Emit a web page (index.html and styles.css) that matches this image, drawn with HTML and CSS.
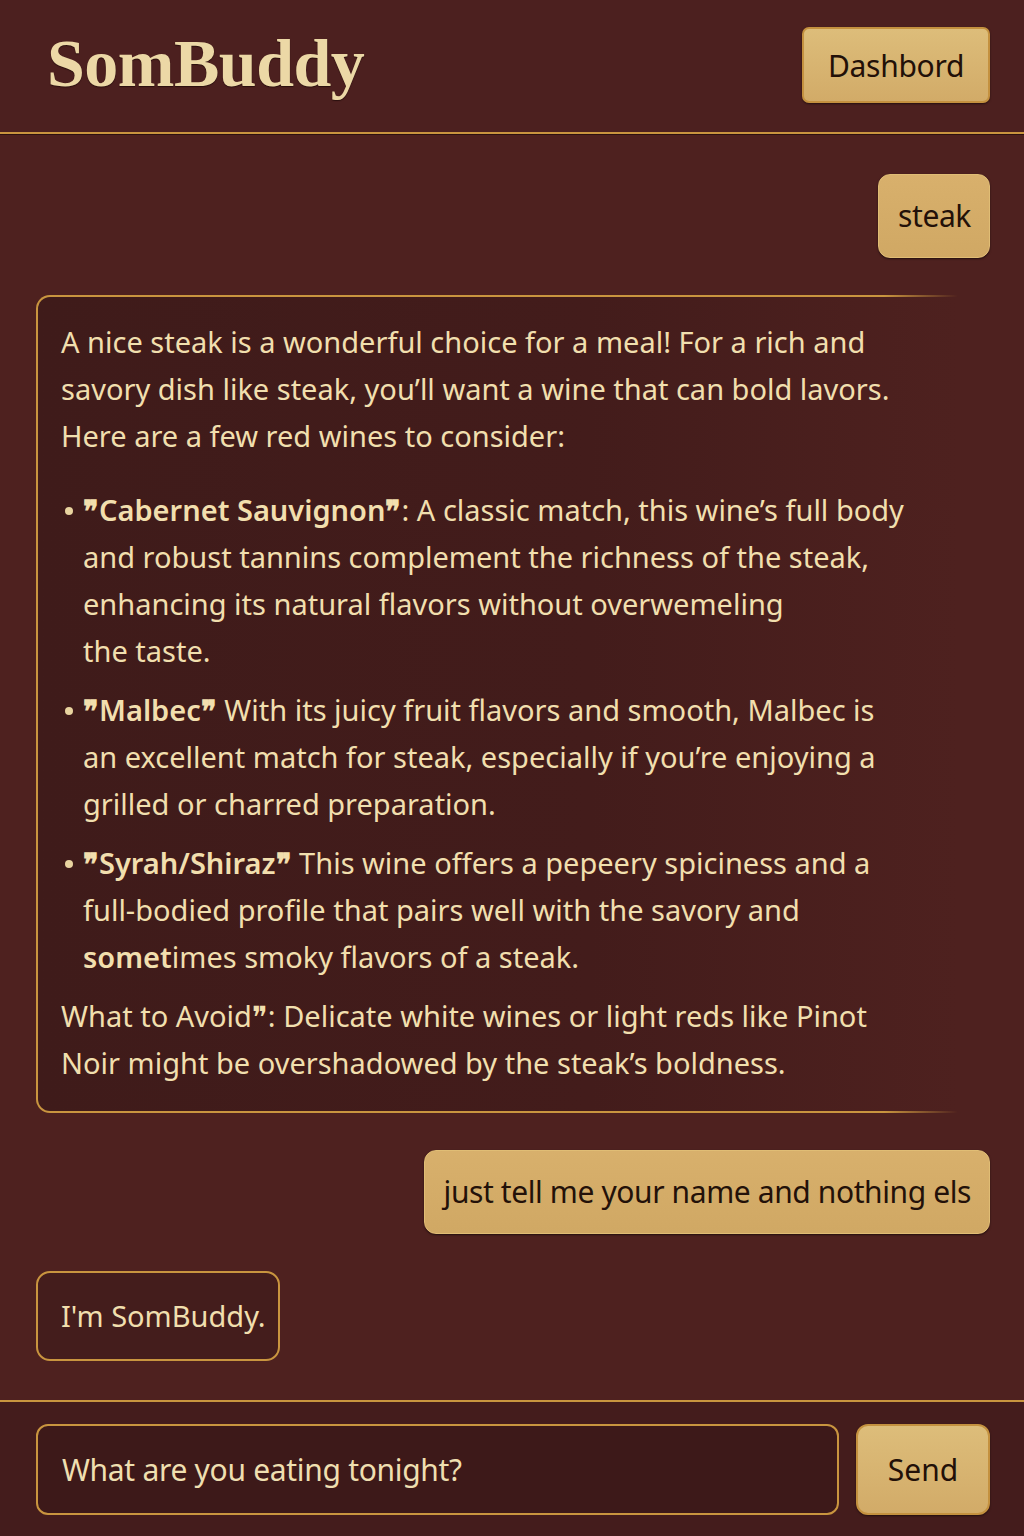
FILE: index.html
```html
<!DOCTYPE html>
<html lang="en">
<head>
<meta charset="utf-8">
<title>SomBuddy</title>
<link rel="stylesheet" href="styles.css">
</head>
<body>
<div class="app">
  <header class="topbar">
    <h1 class="brand">SomBuddy</h1>
    <button class="btn-gold dash">Dashbord</button>
  </header>
  <main class="chat">
    <div class="row user"><div class="bubble-user">steak</div></div>
    <div class="row bot">
      <div class="bubble-bot big">
        <p class="intro">A nice steak is a wonderful choice for a meal! For a rich and<br>savory dish like steak, you’ll want a wine that can bold lavors.<br>Here are a few red wines to consider:</p>
        <ul class="wines">
          <li><b>❞Cabernet Sauvignon❞</b>: A classic match, this wine’s full body<br>and robust tannins complement the richness of the steak,<br>enhancing its natural flavors without overwemeling<br>the taste.</li>
          <li><b>❞Malbec❞</b> With its juicy fruit flavors and smooth, Malbec is<br>an excellent match for steak, especially if you’re enjoying a<br>grilled or charred preparation.</li>
          <li><b>❞Syrah/Shiraz❞</b> This wine offers a pepeery spiciness and a<br>full-bodied profile that pairs well with the savory and<br><b>somet</b>imes smoky flavors of a steak.</li>
        </ul>
        <p class="avoid">What to Avoid❞: Delicate white wines or light reds like Pinot<br>Noir might be overshadowed by the steak’s boldness.</p>
      </div>
    </div>
    <div class="row user"><div class="bubble-user">just tell me your name and nothing els</div></div>
    <div class="row bot"><div class="bubble-bot small">I'm SomBuddy.</div></div>
  </main>
  <footer class="composer">
    <div class="input">What are you eating tonight?</div>
    <button class="btn-gold send">Send</button>
  </footer>
</div>
</body>
</html>
```

FILE: styles.css
```css
* { box-sizing: border-box; }
html, body { margin: 0; padding: 0; }
body {
  background: #4e211f;
  font-family: "Noto Sans", "Open Sans", sans-serif;
  color: #f1dfae;
}
.app {
  width: 1024px;
  height: 1536px;
  display: flex;
  flex-direction: column;
}
.topbar {
  height: 134px;
  display: flex;
  align-items: center;
  justify-content: space-between;
  padding: 0 34px 6px 47px;
  background: #4c201f;
  border-bottom: 2px solid #c9953f;
  box-shadow: 0 1px 0 #2d1110;
}
.brand {
  margin: 0;
  font-family: "Liberation Serif", "Times New Roman", serif;
  font-weight: bold;
  font-size: 68px;
  letter-spacing: -0.5px;
  color: #ecd8a6;
  text-shadow: 0 1px 1px #2a0f0e;
}
.btn-gold {
  font-family: "Noto Sans", sans-serif;
  color: #221008;
  background: linear-gradient(#ddbd7a, #d2ab68);
  border: 2px solid #c4913f;
  border-radius: 7px;
  box-shadow: 0 1px 2px rgba(0,0,0,0.5);
  cursor: pointer;
}
.dash {
  width: 188px;
  height: 76px;
  font-size: 30px;
  letter-spacing: -0.3px;
  margin-top: 4px;
}
.chat {
  flex: 1;
  display: flex;
  flex-direction: column;
  padding: 40px 34px 0 36px;
  gap: 37px;
}
.row { display: flex; }
.row.user { justify-content: flex-end; }
.row.bot { justify-content: flex-start; }
.bubble-user {
  background: linear-gradient(#d8b06c, #d0a864);
  border: 1px solid #e0bd75;
  border-radius: 12px;
  color: #231109;
  font-size: 30px;
  letter-spacing: -0.4px;
  padding: 20px 18px 21px 19px;
  box-shadow: 0 1px 2px rgba(0,0,0,0.55);
}
.bubble-bot {
  border: 2px solid transparent;
  border-radius: 14px;
  font-size: 29px;
  line-height: 47px;
  letter-spacing: 0;
}
.bubble-bot.big {
  width: 922px;
  border-right: none;
  border-top-right-radius: 0;
  border-bottom-right-radius: 0;
  padding: 21px 20px 25px 23px;
  background:
    linear-gradient(to right, #3f1b1a 0%, #431c1b 60%, #4e211f 100%) padding-box,
    linear-gradient(to right, #c9953f 0%, #c9953f 92%, rgba(201,149,63,0) 100%) border-box;
}
.bubble-bot.small {
  background: #441d1c;
  border-color: #c9953f;
  padding: 19px 12px 20px 23px;
  line-height: 47px;
}
.intro { margin: 0 0 27px; }
.wines {
  list-style: none;
  margin: 0;
  padding: 0 0 0 22px;
}
.wines li {
  position: relative;
  margin-bottom: 12px;
}
.wines li::before {
  content: "";
  position: absolute;
  left: -18px;
  top: 21px;
  width: 8px;
  height: 8px;
  border-radius: 50%;
  background: #e9d4a0;
}
.wines b { font-weight: 600; color: #f2dfae; }
.avoid { margin: 0; }
.composer {
  height: 136px;
  border-top: 2px solid #c9953f;
  background: #441c1c;
  display: flex;
  align-items: center;
  gap: 17px;
  padding: 0 34px 0 36px;
}
.input {
  flex: 1;
  height: 91px;
  border: 2px solid #c9953f;
  border-radius: 12px;
  background: #3d1919;
  display: flex;
  align-items: center;
  padding-left: 24px;
  font-size: 30px;
  letter-spacing: -0.3px;
  color: #efdfb0;
}
.send {
  width: 134px;
  height: 91px;
  border-radius: 12px;
  font-size: 30px;
}
```
